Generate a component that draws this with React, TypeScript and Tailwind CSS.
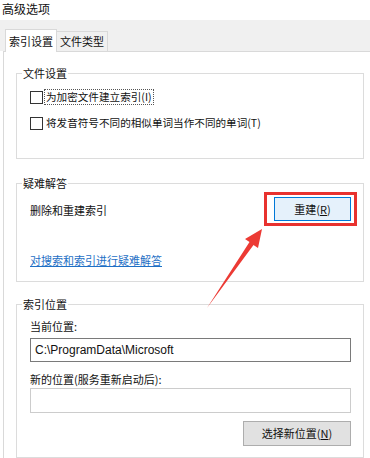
import React from "react";

const font = { fontFamily: '"Noto Sans CJK SC", "Noto Sans", sans-serif' };

function Checkbox({ label, focused }: { label: React.ReactNode; focused?: boolean }) {
  return (
    <label className="flex items-center h-4">
      <span className="w-[13px] h-[13px] border border-[#333] bg-white shrink-0" />
      <span
        className={
          "ml-[2px] px-[1px] leading-[14px] text-[10.6px] " +
          (focused ? "outline outline-1 outline-dotted outline-[#555]" : "")
        }
      >
        {label}
      </span>
    </label>
  );
}

function Group({ title, className, children }: { title: string; className: string; children: React.ReactNode }) {
  return (
    <fieldset className={"border border-[#dcdcdc] min-w-0 " + className}>
      <legend className="-ml-[8px] px-[1px] leading-4 text-[11px]">{title}</legend>
      {children}
    </fieldset>
  );
}

export default function App() {
  return (
    <div className="relative w-[370px] h-[458px] overflow-hidden bg-white text-[11px] text-[#111]" style={font}>
      {/* window title */}
      <div className="h-5 pl-[2px] pt-[1px] text-[12px] leading-4">高级选项</div>

      {/* tab strip */}
      <div className="h-[31px] bg-[#f0f0f0] flex items-end pl-[5px]">
        <div className="h-[23px] w-[52px] bg-white border border-b-0 border-[#d9d9d9] flex items-center justify-center relative top-[1px] z-10">
          索引设置
        </div>
        <div className="h-5 w-[51px] border border-l-0 border-b-0 border-[#d9d9d9] bg-[#f0f0f0] flex items-center justify-center">
          文件类型
        </div>
      </div>

      {/* tab panel */}
      <div className="ml-[3px] border-l border-t border-[#d9d9d9] pl-[12px] pt-[13px] pr-[6px] flex flex-col w-[370px]">
        <Group title="文件设置" className="w-[348px] pl-[13px] pt-2 pb-[27px]">
          <div className="flex flex-col gap-[10px]">
            <Checkbox label="为加密文件建立索引(I)" focused />
            <Checkbox label="将发音符号不同的相似单词当作不同的单词(T)" />
          </div>
        </Group>

        <Group title="疑难解答" className="w-[348px] mt-4 pl-[13px] pr-[12px] pt-[6px] pb-[13px]">
          <div className="flex items-center justify-between h-6">
            <span className="pt-[3px]">删除和重建索引</span>
            <div className="relative">
              <div className="absolute -left-[10px] -top-[5px] -right-[6px] -bottom-[5px] border-[3px] border-[#e8322f]" />
              <button className="w-[77px] h-6 border border-[#0078d7] bg-[#e5f1fb] text-[11px]">
                重建(<span className="underline">R</span>)
              </button>
            </div>
          </div>
          <a className="block mt-[31px] leading-4 text-[#1e6fc5] underline">对搜索和索引进行疑难解答</a>
        </Group>

        <Group title="索引位置" className="w-[348px] mt-[14px] pl-[13px] pr-[12px] pt-[6px] pb-[11px]">
          <div className="leading-4">当前位置:</div>
          <div className="mt-[4px] h-6 border border-[#7a7a7a] flex items-center pl-[4px] text-[12px]" style={{ fontFamily: '"Liberation Sans", sans-serif' }}>
            C:\ProgramData\Microsoft
          </div>
          <div className="mt-[9px] leading-4">新的位置(服务重新启动后):</div>
          <div className="mt-[1px] h-[25px] border border-[#cccccc]" />
          <div className="flex justify-end mt-2">
            <button className="w-[108px] h-[25px] border border-[#adadad] bg-[#e1e1e1] text-[11px]">
              选择新位置(<span className="underline">N</span>)
            </button>
          </div>
        </Group>
      </div>

      {/* red annotation arrow */}
      <svg className="absolute left-0 top-0 pointer-events-none" width="370" height="458" viewBox="0 0 370 458">
        <polygon
          fill="#ec3a34"
          points="262,229 258,248 253.5,245 207,308 249.5,242 245,239"
        />
      </svg>
    </div>
  );
}
